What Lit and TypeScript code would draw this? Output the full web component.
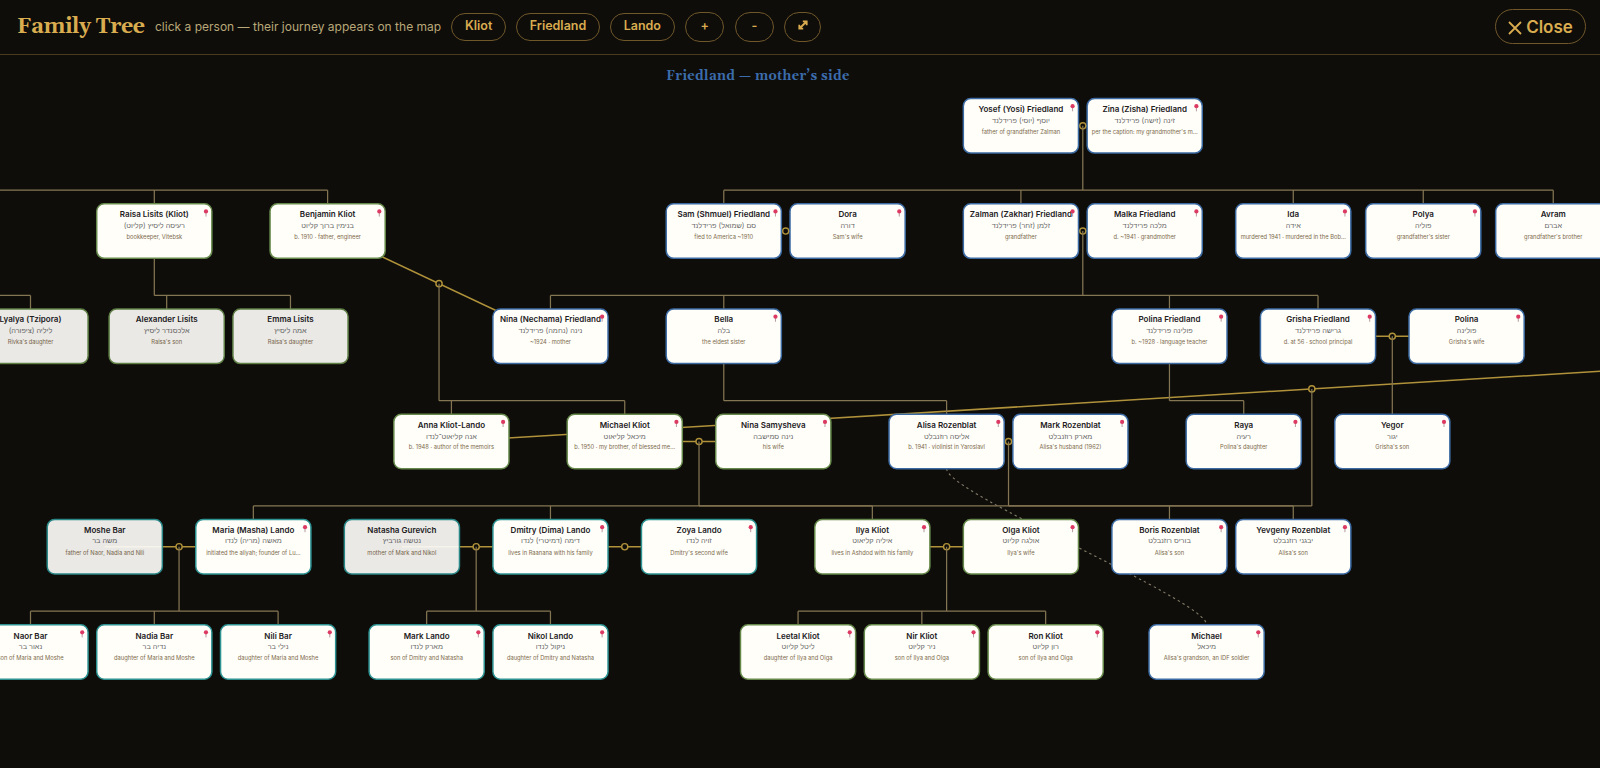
import { LitElement, html, svg, css } from "lit";
import { customElement } from "lit/decorators.js";

type Side = "f" | "k" | "l";
// column (20 world units each), row, side, name, Hebrew name, note, ghost (no map entry)
type Person = [number, number, Side, string, string, string, boolean?];

const people: Person[] = [
  [80, 0, "f", "Yosef (Yosi) Friedland", "יוסף (יוסי) פרידלנד", "father of grandfather Zalman"],
  [90, 0, "f", "Zina (Zisha) Friedland", "זינה (זישה) פרידלנד", "per the caption: my grandmother's m…"],
  [10, 1, "k", "Raisa Lisits (Kliot)", "רעיסה ליסיץ (קליוט)", "bookkeeper, Vitebsk"],
  [24, 1, "k", "Benjamin Kliot", "בנימין ברוך קליוט", "b. 1910 · father, engineer"],
  [56, 1, "f", "Sam (Shmuel) Friedland", "סם (שמואל) פרידלנד", "fled to America ~1910"],
  [66, 1, "f", "Dora", "דורה", "Sam's wife"],
  [80, 1, "f", "Zalman (Zakhar) Friedland", "זלמן (זחר) פרידלנד", "grandfather"],
  [90, 1, "f", "Malka Friedland", "מלכה פרידלנד", "d. ~1941 · grandmother"],
  [102, 1, "f", "Ida", "אידה", "murdered 1941 · murdered in the Bob…"],
  [112.5, 1, "f", "Polya", "פוליה", "grandfather's sister"],
  [123, 1, "f", "Avram", "אברם", "grandfather's brother"],
  [0, 2, "k", "Lyalya (Tzipora)", "ליליה (ציפורה)", "Rivka's daughter", true],
  [11, 2, "k", "Alexander Lisits", "אלכסנדר ליסיץ", "Raisa's son", true],
  [21, 2, "k", "Emma Lisits", "אמה ליסיץ", "Raisa's daughter", true],
  [42, 2, "f", "Nina (Nechama) Friedland", "נינה (נחמה) פרידלנד", "~1924 · mother"],
  [56, 2, "f", "Bella", "בלה", "the eldest sister"],
  [92, 2, "f", "Polina Friedland", "פולינה פרידלנד", "b. ~1928 · language teacher"],
  [104, 2, "f", "Grisha Friedland", "גרישה פרידלנד", "d. at 56 · school principal"],
  [116, 2, "f", "Polina", "פולינה", "Grisha's wife"],
  [34, 3, "k", "Anna Kliot-Lando", "אנה קליאוט־לנדו", "b. 1948 · author of the memoirs"],
  [48, 3, "k", "Michael Kliot", "מיכאל קליאוט", "b. 1950 · my brother, of blessed me…"],
  [60, 3, "k", "Nina Samysheva", "נינה סמישבה", "his wife"],
  [74, 3, "f", "Alisa Rozenblat", "אליסה רוזנבלט", "b. 1941 · violinist in Yaroslavl"],
  [84, 3, "f", "Mark Rozenblat", "מארק רוזנבלט", "Alisa's husband (1962)"],
  [98, 3, "f", "Raya", "רעיה", "Polina's daughter"],
  [110, 3, "f", "Yegor", "יגור", "Grisha's son"],
  [6, 4, "l", "Moshe Bar", "משה בר", "father of Naor, Nadia and Nili", true],
  [18, 4, "l", "Maria (Masha) Lando", "מאשה (מריה) לנדו", "initiated the aliyah; founder of Lu…"],
  [30, 4, "l", "Natasha Gurevich", "נטשה גורביץ", "mother of Mark and Nikol", true],
  [42, 4, "l", "Dmitry (Dima) Lando", "דימה (דמיטרי) לנדו", "lives in Raanana with his family"],
  [54, 4, "l", "Zoya Lando", "זויה לנדו", "Dmitry's second wife"],
  [68, 4, "k", "Ilya Kliot", "איליה קליאוט", "lives in Ashdod with his family"],
  [80, 4, "k", "Olga Kliot", "אולגה קליוט", "Ilya's wife"],
  [92, 4, "f", "Boris Rozenblat", "בוריס רוזנבלט", "Alisa's son"],
  [102, 4, "f", "Yevgeny Rozenblat", "יבגני רוזנבלט", "Alisa's son"],
  [0, 5, "l", "Naor Bar", "נאור בר", "son of Maria and Moshe"],
  [10, 5, "l", "Nadia Bar", "נדיה בר", "daughter of Maria and Moshe"],
  [20, 5, "l", "Nili Bar", "נילי בר", "daughter of Maria and Moshe"],
  [32, 5, "l", "Mark Lando", "מארק לנדו", "son of Dmitry and Natasha"],
  [42, 5, "l", "Nikol Lando", "ניקול לנדו", "daughter of Dmitry and Natasha"],
  [62, 5, "k", "Leetal Kliot", "ליטל קליוט", "daughter of Ilya and Olga"],
  [72, 5, "k", "Nir Kliot", "ניר קליוט", "son of Ilya and Olga"],
  [82, 5, "k", "Ron Kliot", "רון קליוט", "son of Ilya and Olga"],
  [95, 5, "f", "Michael", "מיכאל", "Alisa's grandson, an IDF soldier"],
];

const COL = 20, ROW = 170, W = 186, H = 88;
const cx = (c: number) => c * COL;
const top = (r: number) => r * ROW;
const mid = (r: number) => r * ROW + H / 2;

// column/row of each partner
const couples: [number, number, number, number][] = [
  [80, 0, 90, 0], [56, 1, 66, 1], [80, 1, 90, 1], [24, 1, 42, 2], [104, 2, 116, 2],
  [34, 3, 173, 2], [48, 3, 60, 3], [74, 3, 84, 3], [6, 4, 18, 4], [30, 4, 42, 4],
  [42, 4, 54, 4], [68, 4, 80, 4],
];

// stem column, stem start y, children row, children columns
const descents: [number, number, number, number[]][] = [
  [-20, mid(0), 1, [10, 24]],
  [85, mid(0), 1, [56, 80, 102, 112.5, 123]],
  [-20, mid(1), 2, [0]],
  [10, top(1) + H, 2, [11, 21]],
  [85, mid(1), 2, [42, 56, 92, 104]],
  [33, (mid(1) + mid(2)) / 2, 3, [34, 48]],
  [56, top(2) + H, 3, [74]],
  [92, top(2) + H, 3, [98]],
  [110, mid(2), 3, [110]],
  [103.5, (mid(2) + mid(3)) / 2, 4, [18, 42]],
  [54, mid(3), 4, [68]],
  [79, mid(3), 4, [92, 102]],
  [12, mid(4), 5, [0, 10, 20]],
  [36, mid(4), 5, [32, 42]],
  [74, mid(4), 5, [62, 72, 82]],
];

@customElement("family-chart")
class FamilyChart extends LitElement {
  static styles = css`
    :host { display: block; min-height: 0; }
    svg { display: block; width: 100%; height: 100%; }
    text { text-anchor: middle; font-family: Inter, "Noto Sans", sans-serif; }
    .side { font: 700 21px Gelasio, "Source Serif 4", Georgia, "DejaVu Serif", serif; text-anchor: start; fill: #3c6cab; }
    .couple { stroke: #b0923a; stroke-width: 2.5; }
    .joint { fill: #0e0d0a; stroke: #b0923a; stroke-width: 2.3; }
    .descent { fill: none; stroke: #857653; stroke-width: 2; }
    .relative { fill: none; stroke: #827b66; stroke-width: 1.8; stroke-dasharray: 4 5; }
    .card { fill: #fffef9; stroke-width: 2.4; }
    .f .card { stroke: #3c6ba4; }
    .k .card { stroke: #66894b; }
    .l .card { stroke: #2c9292; }
    .ghost { opacity: 0.92; }
    .ghost .card { fill: #fdfcf9; }
    .name { font-size: 13px; font-weight: 600; fill: #23211e; }
    .hebrew { font-size: 11.8px; fill: #6a6a6a; direction: rtl; }
    .note { font-size: 9.35px; fill: #7d6b4d; }
    .pin { fill: #dc3a62; }
    .needle { stroke: #a98a93; stroke-width: 1.4; }
  `;

  couple([c1, r1, c2, r2]: [number, number, number, number]) {
    return svg`
      <line class="couple" x1=${cx(c1)} y1=${mid(r1)} x2=${cx(c2)} y2=${mid(r2)} />
      <circle class="joint" cx=${cx((c1 + c2) / 2)} cy=${(mid(r1) + mid(r2)) / 2} r="5" />`;
  }

  descent([c, y, r, kids]: [number, number, number, number[]]) {
    const bar = top(r) - 22;
    const all = [c, ...kids];
    const drops = kids.map((k) => `M${cx(k)} ${bar}V${top(r)}`).join("");
    return svg`<path class="descent"
      d=${`M${cx(c)} ${y}V${bar}M${cx(Math.min(...all))} ${bar}H${cx(Math.max(...all))}${drops}`} />`;
  }

  person([c, r, side, name, hebrew, note, ghost]: Person) {
    const low = r > 3;
    return svg`
      <g class=${`${side}${ghost ? " ghost" : ""}`} transform=${`translate(${cx(c)} ${top(r)})`}>
        <rect class="card" x=${-W / 2} y="0" width=${W} height=${H} rx="12" />
        <text class="name" y=${low ? 22.5 : 21.5}>${name}</text>
        <text class="hebrew" y=${low ? 38.5 : 39.5}>${hebrew}</text>
        <text class="note" y=${low ? 57.5 : 56.5}>${note}</text>
        ${ghost ? "" : svg`<line class="needle" x1="83.5" y1="14" x2="83.5" y2="20.5" /><circle class="pin" cx="83.5" cy="12.3" r="3.4" />`}
      </g>`;
  }

  render() {
    const x1 = cx(74), y1 = top(3) + H, x2 = cx(95), y2 = top(5);
    return html`<svg>
      <g transform="translate(30.5 43.6) scale(0.619)">
        <text class="side" x="1027" y="-30" textLength="296">Friedland — mother’s side</text>
        ${couples.map((c) => this.couple(c))}
        ${descents.map((d) => this.descent(d))}
        <path class="relative" d=${`M${x1} ${y1}C${x1} ${y1 + 40} ${x2} ${y2 - 40} ${x2} ${y2}`} />
        ${people.map((p) => this.person(p))}
      </g>
    </svg>`;
  }
}

@customElement("app-root")
class AppRoot extends LitElement {
  static styles = css`
    :host {
      display: grid; grid-template-rows: 55px 1fr; height: 768px; overflow: hidden;
      background: #0e0d0a; font-family: Inter, sans-serif;
    }
    header {
      display: flex; align-items: center; gap: 10.3px; box-sizing: border-box;
      padding: 0 14px 1px 17px; border-bottom: 1px solid #4b3c20;
    }
    h1 {
      margin: 0; padding-top: 1px; letter-spacing: -0.4px; white-space: nowrap; color: #d9ac50;
      font: 700 21.5px/1 Gelasio, "Source Serif 4", Georgia, "DejaVu Serif", serif;
    }
    .hint { font-size: 12px; letter-spacing: 0.01px; color: #b9a878; white-space: nowrap; }
    button {
      box-sizing: border-box; height: 28px; padding: 0; border: 1px solid #70572a; border-radius: 15px;
      background: none; color: #d9ac50; font: 600 12.5px/1 Inter, sans-serif; flex: none;
      display: flex; align-items: center; justify-content: center; gap: 4px;
    }
    .kliot { width: 54.5px; }
    .friedland { width: 83.5px; }
    .lando { width: 64.5px; }
    .round { width: 39.5px; height: 30px; }
    .fit { width: 37px; padding-bottom: 3px; }
    .close { width: 91px; height: 35px; margin-left: auto; border-radius: 18px; font-size: 17px; padding-top: 2px; }
    .icon { display: block; fill: none; stroke: currentColor; stroke-width: 1.8; }
  `;

  render() {
    return html`
      <header>
        <h1>Family Tree</h1>
        <span class="hint">click a person — their journey appears on the map</span>
        <button class="kliot">Kliot</button>
        <button class="friedland">Friedland</button>
        <button class="lando">Lando</button>
        <button class="round">+</button>
        <button class="round">-</button>
        <button class="round fit">
          <svg class="icon" width="10" height="10" viewBox="0 0 10 10"><path d="M1.5 8.5L8.5 1.5M4.8 1.3H8.7V5.2M1.3 4.8V8.7H5.2" /></svg>
        </button>
        <button class="close">
          <svg class="icon" width="14" height="14" viewBox="0 0 14 14"><path d="M1 1L13 13M13 1L1 13" /></svg>Close
        </button>
      </header>
      <family-chart></family-chart>`;
  }
}
